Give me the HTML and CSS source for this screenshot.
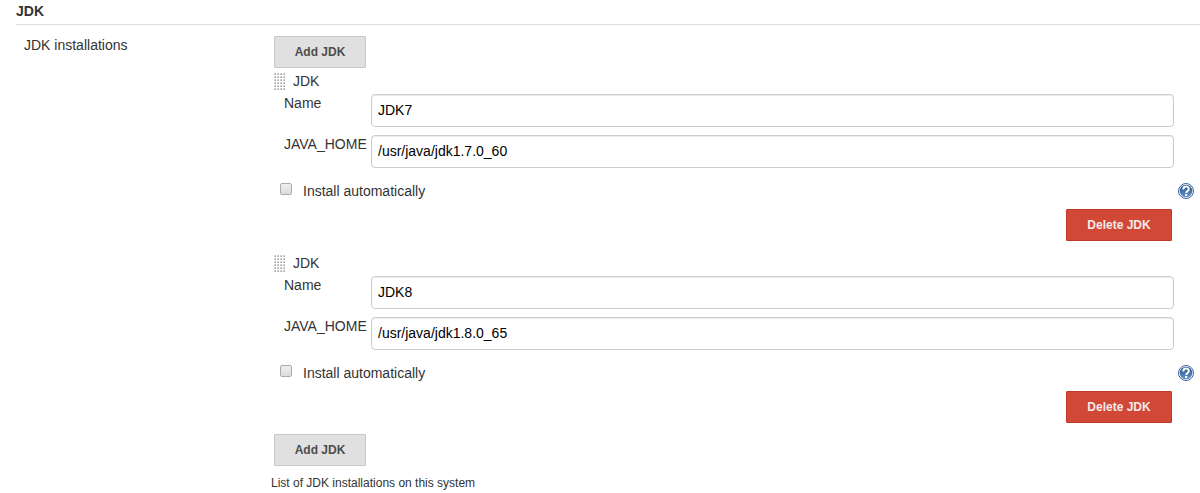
FILE: index.html
```html
<!DOCTYPE html>
<html lang="en">
<head>
    <meta charset="UTF-8">
    <meta name="viewport" content="width=device-width, initial-scale=1.0">
    <title>Configure JDK</title>
    <link rel="stylesheet" href="styles.css">
</head>
<body>
    <!-- shared icons -->
    <svg class="sprite" aria-hidden="true">
        <defs>
            <linearGradient id="helpFill" x1="0" y1="0" x2="0" y2="1">
                <stop offset="0" stop-color="#204a87"/>
                <stop offset="1" stop-color="#6a98cc"/>
            </linearGradient>
            <pattern id="dots" width="3" height="3" patternUnits="userSpaceOnUse">
                <path d="M0 0h2v2h-2z" fill="#dcdcdc"/>
                <path d="M1 0h1v1h-1zM0 1h1v1h-1z" fill="#c4c4c4"/>
                <path d="M1 1h1v1h-1z" fill="#a8a8a8"/>
            </pattern>
        </defs>
        <symbol id="help" viewBox="0 0 16 16">
            <circle cx="8" cy="8" r="7.5" fill="#fff" stroke="#3b66a0"/>
            <circle cx="8" cy="8" r="6.3" fill="url(#helpFill)"/>
            <path d="M5.3 6.4c0-3.9 5.5-3.7 5.5-.5 0 2.1-2.6 2-2.6 4.1" fill="none" stroke="#fff" stroke-width="2"/>
            <path d="M7.1 11h2.1v2h-2.1z" fill="#fff"/>
        </symbol>
        <symbol id="handle" viewBox="0 0 11 17">
            <path d="M0 0h11v17H0z" fill="url(#dots)"/>
        </symbol>
    </svg>

    <form class="config">
        <h2 class="section-title">JDK</h2>
        <div class="section">
            <div class="section-label">JDK installations</div>
            <div class="section-content">
                <div class="repeated">
                    <button type="button" class="btn">Add JDK</button>

                    <div class="chunk">
                        <div class="chunk-header">
                            <svg class="handle"><use href="#handle"/></svg>
                            <span>JDK</span>
                        </div>
                        <div class="row">
                            <label for="name1">Name</label>
                            <input type="text" id="name1" name="name1" value="JDK7">
                        </div>
                        <div class="row">
                            <label for="home1">JAVA_HOME</label>
                            <input type="text" id="home1" name="home1" value="/usr/java/jdk1.7.0_60">
                        </div>
                        <div class="check-row">
                            <input type="checkbox" id="auto1" name="auto1">
                            <label for="auto1">Install automatically</label>
                            <a href="#" class="help" aria-label="Help"><svg><use href="#help"/></svg></a>
                        </div>
                        <div class="actions">
                            <button type="button" class="btn btn-danger">Delete JDK</button>
                        </div>
                    </div>

                    <div class="chunk">
                        <div class="chunk-header">
                            <svg class="handle"><use href="#handle"/></svg>
                            <span>JDK</span>
                        </div>
                        <div class="row">
                            <label for="name2">Name</label>
                            <input type="text" id="name2" name="name2" value="JDK8">
                        </div>
                        <div class="row">
                            <label for="home2">JAVA_HOME</label>
                            <input type="text" id="home2" name="home2" value="/usr/java/jdk1.8.0_65">
                        </div>
                        <div class="check-row">
                            <input type="checkbox" id="auto2" name="auto2">
                            <label for="auto2">Install automatically</label>
                            <a href="#" class="help" aria-label="Help"><svg><use href="#help"/></svg></a>
                        </div>
                        <div class="actions">
                            <button type="button" class="btn btn-danger">Delete JDK</button>
                        </div>
                    </div>

                    <button type="button" class="btn">Add JDK</button>
                </div>
                <p class="description">List of JDK installations on this system</p>
            </div>
        </div>
    </form>
</body>
</html>
```

FILE: styles.css
```css
* {
    margin: 0;
    padding: 0;
    box-sizing: border-box;
}

body {
    background: #fff;
    color: #333;
    font-family: "Liberation Sans", Arial, sans-serif;
    font-size: 14px;
    line-height: 18px;
}

.sprite {
    display: block;
    width: 0;
    height: 0;
}

.config {
    padding-left: 16px;
}

.section-title {
    padding: 2px 0 4px;
    border-bottom: 1px solid #ddd;
    font-size: 14px;
    font-weight: bold;
}

.section {
    display: grid;
    grid-template-columns: 247px 1fr;
    padding: 11px 6px 0 8px;
}

.repeated {
    padding-left: 3px;
}

.btn {
    display: block;
    min-width: 92px;
    height: 32px;
    padding: 0 19px;
    border: 1px solid #c8c8c8;
    border-radius: 1px;
    background: #e0e0e0;
    color: #4d4d4d;
    font-family: inherit;
    font-size: 12px;
    font-weight: bold;
    cursor: pointer;
}

.btn-danger {
    min-width: 106px;
    border-color: #c03a2b;
    background: #d14836;
    color: #f6eaea;
}

.chunk {
    margin: 2px 0;
    padding-bottom: 9px;
}

.chunk-header {
    display: flex;
    align-items: center;
    gap: 8px;
    height: 24px;
    padding-bottom: 2px;
}

.handle {
    width: 11px;
    height: 17px;
}

/* the last 20px are kept free for the help column */
.row {
    display: grid;
    grid-template-columns: 87px 1fr;
    padding: 0 20px 8px 10px;
}

.row input {
    width: 100%;
    height: 33px;
    padding: 0 6px 2px;
    border: 1px solid #ccc;
    border-radius: 4px;
    box-shadow: inset 0 1px 1px rgba(0, 0, 0, 0.08);
    background: #fff;
    color: #000;
    font-family: inherit;
    font-size: 14px;
}

.check-row {
    display: flex;
    align-items: center;
    height: 33px;
    padding-left: 6px;
    padding-bottom: 3px;
}

.check-row input {
    appearance: none;
    width: 12px;
    height: 12px;
    margin-right: 11px;
    margin-bottom: 4px;
    border: 1px solid #acacac;
    border-radius: 2px;
    background: linear-gradient(#eee, #dcdcdc);
}

.check-row input:checked {
    background: #666;
}

.help {
    margin-left: auto;
}

.help svg {
    display: block;
    width: 16px;
    height: 16px;
}

.actions {
    display: flex;
    justify-content: flex-end;
    padding-right: 22px;
}

.description {
    padding-top: 8px;
    font-size: 12px;
}
```
